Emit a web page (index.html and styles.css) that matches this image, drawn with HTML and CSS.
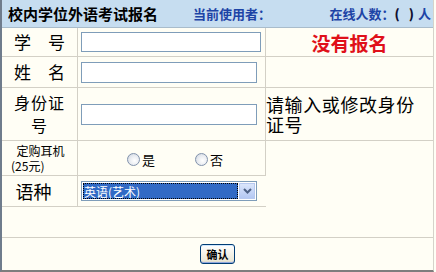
FILE: index.html
```html
<!DOCTYPE html>
<html lang="zh-CN">
<head>
  <meta charset="UTF-8">
  <title>校内学位外语考试报名</title>
  <link rel="stylesheet" href="styles.css">
</head>
<body>
  <div class="panel">
    <div class="head">
      <span class="title">校内学位外语考试报名</span>
      <span class="user">当前使用者：</span>
      <span class="online">在线人数：<b class="count">( )</b>人</span>
    </div>
    <form id="signup">
      <table class="grid">
        <colgroup>
          <col class="c1">
          <col class="c2">
          <col class="c3">
        </colgroup>
        <tr class="r1">
          <td class="lbl">学　号</td>
          <td><input type="text" class="txt wide" name="xh"></td>
          <td class="state">没有报名</td>
        </tr>
        <tr class="r2">
          <td class="lbl">姓　名</td>
          <td><input type="text" class="txt" name="xm"></td>
          <td></td>
        </tr>
        <tr class="r3">
          <td class="lbl tall">身份证<br>号</td>
          <td><input type="text" class="txt" name="sfz"></td>
          <td class="hint">请输入或修改身份证号</td>
        </tr>
        <tr class="r4">
          <td class="lbl small"><span class="buy">定购耳机</span><span class="price">(25元)</span></td>
          <td>
            <div class="radios">
              <label><input type="radio" name="ej" value="1">是</label>
              <label><input type="radio" name="ej" value="0">否</label>
            </div>
          </td>
          <td rowspan="3" class="last"></td>
        </tr>
        <tr class="r5">
          <td class="lbl lang">语种</td>
          <td>
            <span class="select">
              <select name="yz">
                <option>英语(艺术)</option>
                <option>英语</option>
                <option>日语</option>
              </select>
              <span class="drop">
                <svg width="9" height="6" viewBox="0 0 9 6"><path d="M1 1 L4.5 4.5 L8 1" fill="none" stroke="#4d6185" stroke-width="2"/></svg>
              </span>
            </span>
          </td>
        </tr>
        <tr class="r6">
          <td colspan="2"></td>
        </tr>
      </table>
      <div class="actions">
        <button type="submit">确认</button>
      </div>
    </form>
  </div>
</body>
</html>
```

FILE: styles.css
```css
body { margin: 0; background: #fffef5; font-family: "Noto Sans CJK SC", sans-serif; color: #000; }
.panel { width: 434px; height: 272px; box-sizing: border-box; border-left: 2px solid #6f7c8c; border-bottom: 2px solid #7d7d7d; border-right: 1px solid #d6d3ca; background: #fffef5; }

.head { height: 27px; display: flex; align-items: center; background: #c6ddf0; border-bottom: 1px solid #a9bccb; }
.title { width: 185px; padding-left: 6px; font-size: 15px; font-weight: bold; }
.user { flex: 1; font-size: 13px; font-weight: bold; color: #1d44a6; }
.online { font-size: 13px; font-weight: bold; color: #1d44a6; padding-right: 2px; }
.count { color: #101030; letter-spacing: 3px; margin-right: 1px; }

.grid { width: 431px; table-layout: fixed; border-collapse: separate; border-spacing: 0; }
.c1 { width: 76px; }
.c2 { width: 188px; }
.grid td { padding: 0; border-bottom: 1px solid #d3d0c6; border-right: 1px solid #d3d0c6; vertical-align: middle; }
.grid td:last-child { border-right: none; }
.grid td.last { border-right: none; }
.r1 { height: 29px; }
.r2 { height: 31px; }
.r3 { height: 53px; }
.r4 { height: 35px; }
.r5 { height: 31px; }
.r6 { height: 31px; }

.lbl { text-align: center; font-size: 17px; line-height: 20px; }
.lbl.tall { font-size: 16px; line-height: 23px; letter-spacing: 1px; }
.lbl.small { font-size: 12px; line-height: 15px; }
.lbl.lang { font-size: 18px; padding-right: 12px; }
.buy { display: block; text-align: center; padding-left: 2px; }
.price { display: block; text-align: left; padding-left: 9px; }

.txt { display: block; margin-left: 3px; width: 176px; height: 21px; box-sizing: border-box; border: 1px solid #7f9db9; background: #fff; padding: 1px 3px; font-size: 12px; }
.txt.wide { width: 180px; height: 20px; }

.state { text-align: center; color: #e0101a; font-size: 19px; font-weight: bold; }
.hint { font-size: 18px; line-height: 20px; letter-spacing: 0.6px; padding-left: 4px; padding-right: 12px; }

.radios { display: flex; gap: 40px; padding-left: 49px; padding-top: 3px; font-size: 13px; }
.radios label { display: flex; align-items: center; gap: 2px; }
.radios input { appearance: none; margin: 0; width: 13px; height: 13px; border: 1px solid #8192ac; border-radius: 50%; background: radial-gradient(circle at 60% 60%, #ffffff 0, #e9ecf1 50%, #c9d0db 100%); }

.select { display: flex; margin-left: 3px; width: 176px; height: 20px; box-sizing: border-box; border: 1px solid #7f9db9; background: #fff; padding: 1px; }
.select select { appearance: none; flex: 1; min-width: 0; border: none; outline: 1px dotted #000; outline-offset: -1px; background: #316ac5; color: #fff; font-family: "Noto Sans CJK SC", sans-serif; font-size: 12px; padding: 0 1px; margin-right: 1px; }
.drop { width: 16px; display: flex; align-items: center; justify-content: center; background: linear-gradient(#dbe6fb, #b4c8f3); border: 1px solid #b7c9ef; box-sizing: border-box; }

.actions { height: 31px; display: flex; align-items: center; justify-content: center; }
.actions button { width: 35px; height: 20px; padding: 0; font-family: "Noto Sans CJK SC", sans-serif; font-size: 11px; font-weight: bold; border: 1px solid #003c74; border-radius: 3px; background: linear-gradient(#ffffff, #ece9d8 85%, #d6d0c5); box-shadow: inset 0 -1px 0 #8fa7dd, inset 0 1px 0 #cee7ff; cursor: pointer; }
```
